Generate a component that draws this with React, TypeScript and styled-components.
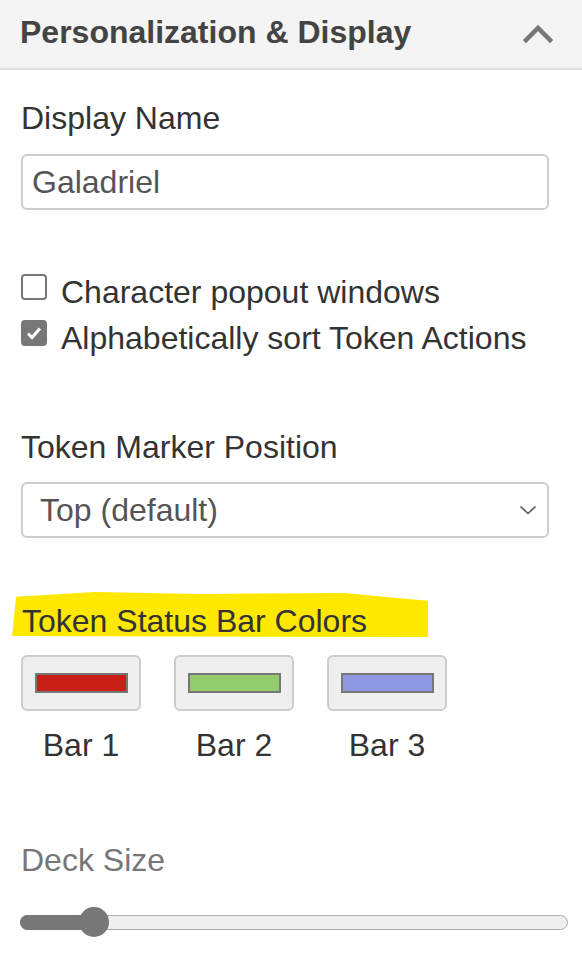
import React from "react";
import styled, { createGlobalStyle } from "styled-components";

const FONT = `"Liberation Sans", Arial, Helvetica, sans-serif`;

const GlobalStyle = createGlobalStyle`
  body {
    margin: 0;
    background: #ffffff;
    font-family: ${FONT};
  }
`;

const bars = [
  { label: "Bar 1", color: "#c81f17" },
  { label: "Bar 2", color: "#93cb6d" },
  { label: "Bar 3", color: "#8e99e2" },
];

const App = () => {
  return (
    <Panel>
      <GlobalStyle />
      <Header>
        <HeaderTitle>Personalization &amp; Display</HeaderTitle>
        <svg width="32" height="20" viewBox="0 0 32 20">
          <path d="M4 16 L16 4 L28 16" fill="none" stroke="#777" strokeWidth="4.5" strokeLinecap="square" />
        </svg>
      </Header>
      <Body>
        <Label $top={30}>Display Name</Label>
        <TextInput defaultValue="Galadriel" />

        <CheckList>
          <CheckRow>
            <CheckBox />
            <CheckText>Character popout windows</CheckText>
          </CheckRow>
          <CheckRow>
            <CheckBox $checked>
              <svg width="18" height="16" viewBox="0 0 18 16">
                <path d="M3 8.5 L7 12.5 L15 3.5" fill="none" stroke="#fff" strokeWidth="3" />
              </svg>
            </CheckBox>
            <CheckText>Alphabetically sort Token Actions</CheckText>
          </CheckRow>
        </CheckList>

        <Label $top={73}>Token Marker Position</Label>
        <SelectBox>
          <span>Top (default)</span>
          <svg width="18" height="10" viewBox="0 0 18 10">
            <path d="M1.5 1.5 L9 8.5 L16.5 1.5" fill="none" stroke="#555" strokeWidth="1.6" />
          </svg>
        </SelectBox>

        <Highlight>Token Status Bar Colors</Highlight>
        <BarRow>
          {bars.map((bar) => (
            <BarItem key={bar.label}>
              <BarButton>
                <Swatch $color={bar.color} />
              </BarButton>
              <BarLabel>{bar.label}</BarLabel>
            </BarItem>
          ))}
        </BarRow>

        <Label $top={79} $muted>
          Deck Size
        </Label>
        <Slider>
          <SliderFill style={{ width: "72px" }} />
          <SliderThumb style={{ left: "58px" }} />
        </Slider>
      </Body>
    </Panel>
  );
};

export default App;

const Panel = styled.div`
  width: 582px;
  min-height: 974px;
  background: #fff;
  font-family: ${FONT};
`;

const Header = styled.div`
  height: 68px;
  display: flex;
  align-items: center;
  justify-content: space-between;
  padding: 0 28px 0 20px;
  background: #f4f4f4;
  border-bottom: 2px solid #dedede;
`;

const HeaderTitle = styled.div`
  font-size: 32px;
  font-weight: 700;
  color: #444;
  margin-top: -4px;
`;

const Body = styled.div`
  display: flex;
  flex-direction: column;
  align-items: flex-start;
  padding: 0 33px 0 21px;
`;

const Label = styled.div<{ $top: number; $muted?: boolean }>`
  margin-top: ${(p) => p.$top}px;
  font-size: 32px;
  line-height: 36px;
  color: ${(p) => (p.$muted ? "#777" : "#333")};
`;

const TextInput = styled.input`
  box-sizing: border-box;
  width: 100%;
  height: 56px;
  margin-top: 18px;
  padding: 0 9px;
  border: 2px solid #cccccc;
  border-radius: 6px;
  font-family: ${FONT};
  font-size: 32px;
  color: #555;
  outline: none;
`;

const CheckList = styled.div`
  display: flex;
  flex-direction: column;
  gap: 10px;
  margin-top: 64px;
`;

const CheckRow = styled.div`
  display: flex;
  align-items: flex-start;
  gap: 14px;
`;

const CheckBox = styled.div<{ $checked?: boolean }>`
  box-sizing: border-box;
  flex: none;
  width: 26px;
  height: 26px;
  border: 2px solid #777;
  border-radius: 4px;
  background: ${(p) => (p.$checked ? "#777" : "#fff")};
  display: flex;
  align-items: center;
  justify-content: center;
`;

const CheckText = styled.span`
  font-size: 32px;
  line-height: 36px;
  color: #333;
`;

const SelectBox = styled.div`
  box-sizing: border-box;
  width: 100%;
  height: 56px;
  margin-top: 17px;
  padding: 0 10px 0 17px;
  display: flex;
  align-items: center;
  justify-content: space-between;
  border: 2px solid #cccccc;
  border-radius: 6px;
  font-size: 32px;
  color: #555;
`;

const Highlight = styled.div`
  box-sizing: border-box;
  width: 416px;
  margin: 52px 0 0 -9px;
  padding: 13px 0 0 10px;
  font-size: 32px;
  line-height: 36px;
  color: #333;
  background: #ffe800;
  clip-path: polygon(
    1% 14%,
    20% 4%,
    45% 8%,
    80% 6%,
    92% 16%,
    100% 22%,
    100% 96%,
    0% 94%
  );
`;

const BarRow = styled.div`
  display: flex;
  gap: 33px;
  margin-top: 16px;
`;

const BarItem = styled.div`
  display: flex;
  flex-direction: column;
  align-items: center;
`;

const BarButton = styled.div`
  box-sizing: border-box;
  width: 120px;
  height: 56px;
  display: flex;
  align-items: center;
  justify-content: center;
  background: #efefef;
  border: 2px solid #cccccc;
  border-radius: 6px;
`;

const Swatch = styled.div<{ $color: string }>`
  box-sizing: border-box;
  width: 93px;
  height: 20px;
  background: ${(p) => p.$color};
  border: 2px solid #777;
`;

const BarLabel = styled.div`
  margin-top: 16px;
  font-size: 32px;
  line-height: 36px;
  color: #333;
`;

const Slider = styled.div`
  position: relative;
  box-sizing: border-box;
  width: 548px;
  height: 15px;
  margin: 37px 0 0 -1px;
  background: #efefef;
  border: 1.5px solid #aaa;
  border-radius: 8px;
`;

const SliderFill = styled.div`
  position: absolute;
  left: -1.5px;
  top: -1.5px;
  height: 15px;
  background: #777;
  border-radius: 8px 0 0 8px;
`;

const SliderThumb = styled.div`
  position: absolute;
  top: -9px;
  width: 30px;
  height: 30px;
  border-radius: 50%;
  background: #777;
`;
